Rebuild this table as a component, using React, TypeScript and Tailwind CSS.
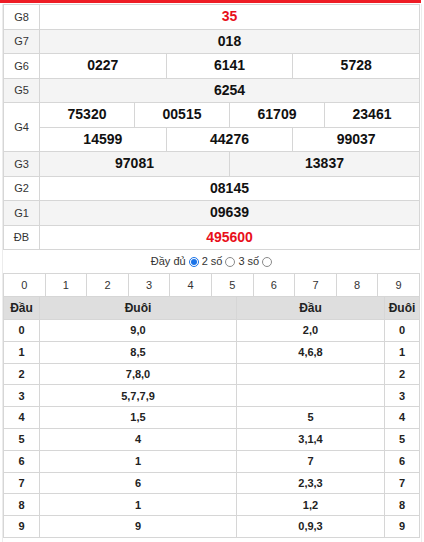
const font = { fontFamily: '"Liberation Sans", Arial, sans-serif' }

const prizes: { label: string; rows: string[][]; red?: boolean }[] = [
  { label: "G8", rows: [["35"]], red: true },
  { label: "G7", rows: [["018"]] },
  { label: "G6", rows: [["0227", "6141", "5728"]] },
  { label: "G5", rows: [["6254"]] },
  { label: "G4", rows: [["75320", "00515", "61709", "23461"], ["14599", "44276", "99037"]] },
  { label: "G3", rows: [["97081", "13837"]] },
  { label: "G2", rows: [["08145"]] },
  { label: "G1", rows: [["09639"]] },
  { label: "ĐB", rows: [["495600"]], red: true },
]

const loto = [
  ["0", "9,0", "2,0", "0"],
  ["1", "8,5", "4,6,8", "1"],
  ["2", "7,8,0", "", "2"],
  ["3", "5,7,7,9", "", "3"],
  ["4", "1,5", "5", "4"],
  ["5", "4", "3,1,4", "5"],
  ["6", "1", "7", "6"],
  ["7", "6", "2,3,3", "7"],
  ["8", "1", "1,2", "8"],
  ["9", "9", "0,9,3", "9"],
]

function Radio({ checked }: { checked?: boolean }) {
  return (
    <span
      className={`inline-flex h-[10px] w-[10px] items-center justify-center rounded-full border ${
        checked ? "border-[#1a73e8]" : "border-[#8a8a8a]"
      }`}
    >
      {checked && <span className="h-[6px] w-[6px] rounded-full bg-[#1a73e8]" />}
    </span>
  )
}

export default function App() {
  return (
    <div className="h-[542px] w-[424px] overflow-hidden bg-white text-[#222]" style={font}>
      <div className="h-[3px] w-[421px] bg-[#ee1c25]" />

      <div className="ml-[2px] h-[539px] w-[420px] border-x border-[#ececec] pr-[1px]">
        {/* Prize table */}
        <div className="mt-[1px] border border-[#d6d6d6]">
          {prizes.map((p, i) => (
            <div
              key={p.label}
              className={`flex border-b border-[#d6d6d6] last:border-b-0 ${i % 2 === 1 ? "bg-[#f4f4f4]" : "bg-white"}`}
            >
              <div className="flex w-[36px] shrink-0 items-center justify-center border-r border-[#d6d6d6] text-[11px] text-[#333]">
                {p.label}
              </div>
              <div className="flex flex-1 flex-col">
                {p.rows.map((row, ri) => (
                  <div key={ri} className="flex h-[23.5px] border-[#d6d6d6] [&+&]:h-[24.5px] [&+&]:border-t">
                    {row.map((n, ci) => (
                      <div
                        key={ci}
                        className={`flex flex-1 items-center justify-center border-r border-[#d6d6d6] text-[14px] font-bold last:border-r-0 ${
                          p.red ? "text-[#e8101b]" : "text-[#111]"
                        }`}
                      >
                        {n}
                      </div>
                    ))}
                  </div>
                ))}
              </div>
            </div>
          ))}
        </div>

        {/* Options */}
        <div className="flex h-[23px] items-center justify-center gap-[3px] text-[11px] text-[#333]">
          <span>Đầy đủ</span>
          <Radio checked />
          <span>2 số</span>
          <Radio />
          <span>3 số</span>
          <Radio />
        </div>

        {/* Loto table */}
        <div className="border border-[#d6d6d6]">
          <div className="flex h-[23px] border-b border-[#d6d6d6]">
            {Array.from({ length: 10 }, (_, d) => (
              <div
                key={d}
                className="flex flex-1 items-center justify-center border-r border-[#d6d6d6] text-[11px] text-[#333] last:border-r-0"
              >
                {d}
              </div>
            ))}
          </div>

          <div className="flex h-[23px] border-b border-[#d6d6d6] bg-[#dedede] text-[12px] font-bold">
            <div className="flex w-[36px] items-center justify-center border-r border-[#d6d6d6]">Đầu</div>
            <div className="flex w-[197px] items-center justify-center border-r border-[#d6d6d6]">Đuôi</div>
            <div className="flex w-[148px] items-center justify-center border-r border-[#d6d6d6]">Đầu</div>
            <div className="flex flex-1 items-center justify-center">Đuôi</div>
          </div>

          {loto.map((r) => (
            <div key={r[0]} className="flex h-[21.8px] border-b border-[#d6d6d6] text-[11px] font-bold last:h-[20.8px] last:border-b-0">
              <div className="flex w-[36px] items-center justify-center border-r border-[#d6d6d6]">{r[0]}</div>
              <div className="flex w-[197px] items-center justify-center border-r border-[#d6d6d6]">{r[1]}</div>
              <div className="flex w-[148px] items-center justify-center border-r border-[#d6d6d6]">{r[2]}</div>
              <div className="flex flex-1 items-center justify-center">{r[3]}</div>
            </div>
          ))}
        </div>
      </div>
    </div>
  )
}
